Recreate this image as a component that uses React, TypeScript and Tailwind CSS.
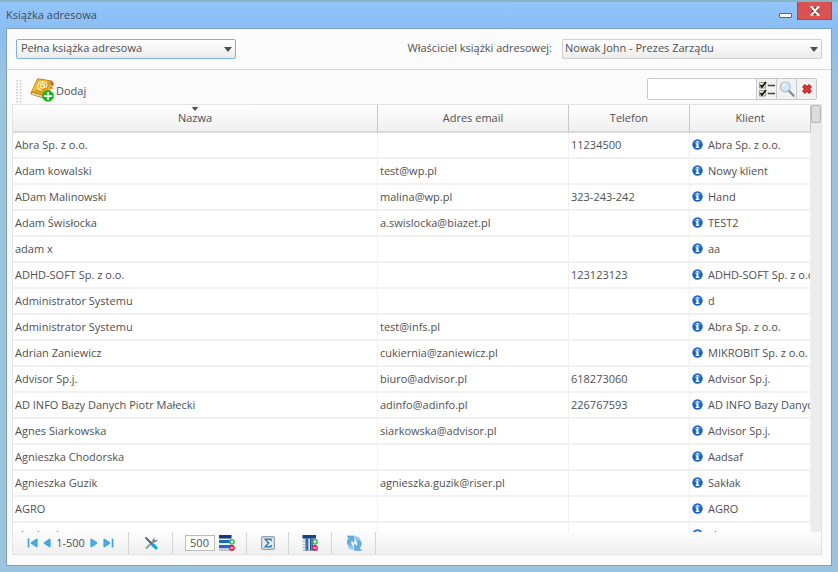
import React, { useState } from 'react';

type Contact = {
  name: string;
  email?: string;
  phone?: string;
  client: string;
};

const contacts: Contact[] = [
  { name: 'Abra Sp. z o.o.', phone: '11234500', client: 'Abra Sp. z o.o.' },
  { name: 'Adam kowalski', email: 'test@wp.pl', client: 'Nowy klient' },
  { name: 'ADam Malinowski', email: 'malina@wp.pl', phone: '323-243-242', client: 'Hand' },
  { name: 'Adam Świsłocka', email: 'a.swislocka@biazet.pl', client: 'TEST2' },
  { name: 'adam x', client: 'aa' },
  { name: 'ADHD-SOFT Sp. z o.o.', phone: '123123123', client: 'ADHD-SOFT Sp. z o.o.' },
  { name: 'Administrator Systemu', client: 'd' },
  { name: 'Administrator Systemu', email: 'test@infs.pl', client: 'Abra Sp. z o.o.' },
  { name: 'Adrian Zaniewicz', email: 'cukiernia@zaniewicz.pl', client: 'MIKROBIT Sp. z o.o.' },
  { name: 'Advisor Sp.j.', email: 'biuro@advisor.pl', phone: '618273060', client: 'Advisor Sp.j.' },
  { name: 'AD INFO Bazy Danych Piotr Małecki', email: 'adinfo@adinfo.pl', phone: '226767593', client: 'AD INFO Bazy Danych' },
  { name: 'Agnes Siarkowska', email: 'siarkowska@advisor.pl', client: 'Advisor Sp.j.' },
  { name: 'Agnieszka Chodorska', client: 'Aadsaf' },
  { name: 'Agnieszka Guzik', email: 'agnieszka.guzik@riser.pl', client: 'Sakłak' },
  { name: 'AGRO', client: 'AGRO' },
  { name: 'akademia', client: 'aka' },
];

const InfoIcon = () => (
  <svg viewBox="0 0 12 12" className="h-3 w-3 shrink-0">
    <circle cx="5.500" cy="5.500" r="5.200" fill="#1763c6" />
    <path d="M1.500 4.100a4.400 4.400 0 0 1 8 0Q5.500 5.500 1.500 4.100" fill="#6fa6e6" opacity=".6" />
    <path d="M4.500 2h2v1.500h-2zM3.800 4.300h2.700v3.400h.8v1.200H3.700V7.700h.8V5.500h-.7z" fill="#fff" />
  </svg>
);

const BookIcon = () => (
  <svg viewBox="0 0 24 24" className="h-6 w-6">
    <path d="M6.500 2Q7.500.4 9.500.6L21 2.400q2 .6 1.600 2.200L18.500 18 15.500 21 1.500 16.800Q.2 15.800.8 14.500z" fill="#a4660f" />
    <path d="M1.500 14.500 15.500 18.500 20 6l1.300.6L17 18.400l-1.500 1.700L2.200 16.400q-1.200-1-.7-1.900z" fill="#f5ead0" />
    <path d="M2 15.500 15.500 19.400" stroke="#c9b27e" strokeWidth=".5" />
    <path d="M6.900 2.400Q7.900 1 9.500 1.300L20.300 3q1.500.4 1 1.900L16.500 17q-.4 1-1.500.7L2.300 14.200q-1-.4-.6-1.400z" fill="#dd9d16" />
    <path d="M6.900 2.400Q7.900 1 9.500 1.300L20.300 3Q14 5 10.500 11.500L2 13z" fill="#f3c63a" opacity=".7" />
    <path d="M22 4.600h1.600v3h-2.500z" fill="#e5482b" />
    <path d="M20.800 8.500h1.800v2.500h-2.600z" fill="#ef8a22" />
    <ellipse cx="12.300" cy="8" rx="2" ry="1.900" fill="none" stroke="#fff6d8" strokeWidth="1.100" />
    <path d="M14.500 6.200 14 8.800q1.800 1.300 2.800-.9.500-3.900-4-4.200-4.700.2-5.400 4.300.2 4.100 4.900 4" fill="none" stroke="#fff6d8" strokeWidth="1.100" />
    <circle cx="18" cy="18" r="5.800" fill="#10bb1b" />
    <path d="M17 14.200h2V17h2.800v2H19v2.800h-2V19h-2.800v-2H17z" fill="#fff" />
  </svg>
);

const ChecklistIcon = () => (
  <svg viewBox="0 0 16 16" className="h-4 w-4">
    <path d="M.5 1.500h6V7h-6zM.5 9.500h6V15h-6z" fill="#e3e2cf" stroke="#8c8b7c" strokeWidth=".8" />
    <path d="M1.500 4 3 6 7 1M1.500 12 3 14 7 9" fill="none" stroke="#111" strokeWidth="1.700" />
    <path d="M8.800 4.500H16M8.800 12.500H16" stroke="#444" strokeWidth="1.500" />
  </svg>
);

const MagnifierIcon = () => (
  <svg viewBox="0 0 16 16" className="h-4 w-4">
    <path d="m10 10 4.600 4.600" stroke="#8b8b8b" strokeWidth="2.200" strokeLinecap="round" />
    <circle cx="6.300" cy="5.900" r="4.900" fill="#cfe9fb" stroke="#b4bdc4" strokeWidth="1.200" />
    <path d="M3 5.500a3.300 3.300 0 0 1 4.500-2.700Q5 4 3 5.500" fill="#fff" />
  </svg>
);

const RedCrossIcon = () => (
  <svg viewBox="0 0 12 12" className="h-3 w-3">
    <path d="m2.500 2.500 7 7M9.500 2.500l-7 7" stroke="#a81616" strokeWidth="4" />
    <path d="m2.500 2.500 7 7M9.500 2.500l-7 7" stroke="#e03a3a" strokeWidth="2.200" />
  </svg>
);

// Blue arrow used by the pager
const PagerArrow = ({ flip }: { flip?: boolean }) => (
  <svg viewBox="0 0 8 10" className={flip ? 'h-[10px] w-2 -scale-x-100' : 'h-[10px] w-2'}>
    <path d="M1.200 1.500v7L6.500 5z" fill="#4fb0f0" stroke="#3fa3e6" strokeWidth="1.600" strokeLinejoin="round" />
  </svg>
);

// Arrow with a bar, for the first and last page
const PagerEnd = ({ flip }: { flip?: boolean }) => (
  <svg viewBox="0 0 11 10" className={flip ? 'h-[10px] w-[11px] -scale-x-100' : 'h-[10px] w-[11px]'}>
    <path d="M1.200 1.500v7L6.500 5z" fill="#4fb0f0" stroke="#3fa3e6" strokeWidth="1.600" strokeLinejoin="round" />
    <path d="M9.500.5v9" stroke="#3ea0e4" strokeWidth="1.600" />
  </svg>
);

const ToolsIcon = () => (
  <svg viewBox="0 0 14 14" className="h-[14px] w-[14px]">
    <path d="M2 12.500 9.500 5" stroke="#9aa1a6" strokeWidth="2.200" />
    <path d="M8.500 5.500Q8 2.800 10.500 1.500L10.300 3.700l1.300.8L13.400 3Q13.400 6.200 10 6.500z" fill="#777f85" />
    <path d="M1.500 1.500 8 8" stroke="#596067" strokeWidth="1.800" />
    <path d="m8.500 8.500 3.500 3.300" stroke="#16a3dc" strokeWidth="3.200" strokeLinecap="round" />
  </svg>
);

const PlusMinus = () => (
  <>
    <circle cx="13" cy="6.800" r="2.900" fill="#38b449" />
    <path d="M11.400 6.800h3.200M13 5.200v3.200" stroke="#fff" strokeWidth="1.100" />
    <circle cx="13" cy="12.900" r="2.900" fill="#e01b49" />
    <path d="M11.400 12.900h3.200" stroke="#fff" strokeWidth="1.200" />
  </>
);

const RowsIcon = () => (
  <svg viewBox="0 0 16 16" className="h-4 w-4">
    <path d="M0 0h12.500v16H0z" fill="#e6ebf1" />
    <path d="M0 0h12.500v3.500H0z" fill="#12397f" />
    <path d="M0 5h12.500v3H0zM0 10h12.500v3H0z" fill="#1d69c4" />
    <path d="M0 14h12.500M0 15.700h12.500M3 13v3M6 13v3M9 13v3" stroke="#a2abb8" strokeWidth=".7" />
    <PlusMinus />
  </svg>
);

const ColumnsIcon = () => (
  <svg viewBox="0 0 16 16" className="h-4 w-4">
    <path d="M.5 0H14v16H.5z" fill="#e6eaef" />
    <path d="M.5 0H14v3.500H.5z" fill="#15428d" />
    <path d="M3.500 3.500h2.800V16H3.500zM8 3.500h2.800V16H8z" fill="#184a9d" />
    <path d="M4.400 4h1v12h-1zM8.900 4h1v12h-1z" fill="#3f94dd" />
    <path d="M.5 6.500h3M.5 9.500h3M.5 12.500h3M.5 15.500h13" stroke="#9aa4b2" strokeWidth=".7" />
    <PlusMinus />
  </svg>
);

const SumIcon = () => (
  <svg viewBox="0 0 14 14" className="h-[14px] w-[14px]">
    <rect x=".6" y=".6" width="12.800" height="12.800" rx="1.500" fill="#e4e9ec" stroke="#969ea4" strokeWidth="1.200" />
    <path d="M10 5V3.200H4.300L7.500 7l-3.200 3.800H10V9" fill="none" stroke="#2f7fb8" strokeWidth="1.500" />
  </svg>
);

const RefreshIcon = () => (
  <svg viewBox="0 0 16 16" className="h-4 w-4">
    <path d="M1 1h7v6.500L5.700 5.300Q4.300 6.800 4.900 9l2 2.800Q1.700 11.500 1.200 7.500q0-2.800 1.800-4.600z" fill="#62b0e8" stroke="#4f9bd6" strokeWidth=".6" />
    <path d="M15.500 15.500h-7V9l2.300 2.200Q12.200 9.700 11.600 7.500l-2-3.700Q14.800 4 15.300 8.500q0 2.800-1.900 4.800z" fill="#62b0e8" stroke="#4f9bd6" strokeWidth=".6" />
    <path d="M8.500 1q5 .2 6 4l-2.500 1Q11.300 4 8.500 3.800zM7.500 15q-5-.2-6-4L4 10q.7 2 3.500 2.200z" fill="#9ccdf3" />
  </svg>
);

const Caret = ({ className }: { className: string }) => (
  <svg viewBox="0 0 8 5" className={className}>
    <path d="M0 0h8L4 5z" fill="#505050" />
  </svg>
);

const headCell =
  'relative h-7 border-r border-b-2 border-r-[#c8c8c8] border-b-[#d9d9d9] bg-linear-to-b from-white to-[#efefef] p-0 text-center font-normal';
const bodyCell = 'h-[26px] truncate border-r border-b-2 border-[#f1f1f1] py-0 pr-0 pl-[2px]';
const footGroup = 'flex items-center justify-center border-r border-[#d5d5d5]';

const AddressBook: React.FC = () => {
  const [book, setBook] = useState('full');
  const [owner, setOwner] = useState('nowak');
  const [query, setQuery] = useState('');
  const [pageSize, setPageSize] = useState('500');

  return (
    <div className="flex h-screen flex-col border-t-2 border-t-[#86b4c4] bg-linear-to-b from-[#92c6fb] from-0% via-[#8abdf2] via-5% to-[#9dc4df] to-15% px-[6px] pb-[6px] font-['Open_Sans','Noto_Sans',sans-serif] text-[11px] text-[#505050]">
      {/* Title bar */}
      <header className="flex h-[26px] shrink-0 items-start justify-between">
        <h1 className="pt-[5px] text-[11px] leading-4 text-[#3f4b58]">Książka adresowa</h1>
        <div className="flex items-start">
          <button type="button" aria-label="Minimalizuj" className="flex h-[18px] w-6 items-end justify-center pb-[2px]">
            <span className="h-[5px] w-[13px] rounded-[1px] border border-[#4467a5] bg-white" />
          </button>
          <button type="button" aria-label="Zamknij" className="flex h-[18px] w-[35px] items-center justify-center border border-t-0 border-[#b34444] bg-[#dc5250]">
            <svg viewBox="0 0 12 10" className="h-[10px] w-3">
              <path d="M2.800 1.200 9.200 8.800M9.200 1.200 2.800 8.800" stroke="#7a3a3a" strokeWidth="4" />
              <path d="M3 1.500 9 8.500M9 1.500 3 8.500M1.500 1.200h3M7.500 1.200h3M1.500 8.800h3M7.500 8.800h3" stroke="#fff" strokeWidth="2" />
            </svg>
          </button>
        </div>
      </header>

      <main className="flex min-h-0 flex-1 flex-col border border-[#7f9fbd] bg-[#fbfbfb]">
        {/* Book and owner selection */}
        <div className="flex h-[41px] shrink-0 items-center justify-between border-b border-[#d8d8d8] px-[9px] pb-px">
          <div className="relative">
            <select
              aria-label="Książka"
              value={book}
              onChange={(e) => setBook(e.target.value)}
              className="h-5 w-[220px] appearance-none rounded-[2px] border border-[#7fb2dd] bg-linear-to-b from-white to-[#ececec] px-1 outline-none"
            >
              <option value="full">Pełna książka adresowa</option>
            </select>
            <Caret className="pointer-events-none absolute top-2 right-1 h-[5px] w-2" />
          </div>
          <div className="flex items-center gap-[10px]">
            <label htmlFor="owner">Właściciel książki adresowej:</label>
            <div className="relative">
              <select
                id="owner"
                value={owner}
                onChange={(e) => setOwner(e.target.value)}
                className="h-5 w-[260px] appearance-none rounded-[2px] border border-[#cfcfcf] bg-linear-to-b from-white to-[#ececec] px-[2px] outline-none"
              >
                <option value="nowak">Nowak John - Prezes Zarządu</option>
              </select>
              <Caret className="pointer-events-none absolute top-2 right-1 h-[5px] w-2" />
            </div>
          </div>
        </div>

        {/* Toolbar */}
        <div className="flex h-[34px] shrink-0 items-end justify-between pr-[14px] pl-[9px]">
          <div className="flex items-end gap-[8px]">
            <svg viewBox="0 0 6 24" className="h-6 w-[6px]">
              <path d="M1 0v24M4.500 0v24" stroke="#c9c9c9" strokeWidth="1.500" strokeDasharray="1.500 1.500" />
            </svg>
            <button type="button" className="flex items-end gap-[2px] pb-[2px]">
              <BookIcon />
              <span className="pb-[3px]">Dodaj</span>
            </button>
          </div>
          <div className="mb-1 flex h-[22px] overflow-hidden rounded-[2px] border border-[#c9c9c9] bg-[#f1f1f1]">
            <input
              aria-label="Szukaj"
              value={query}
              onChange={(e) => setQuery(e.target.value)}
              className="w-[108px] bg-white px-1 outline-none"
            />
            <button type="button" aria-label="Pola wyszukiwania" className="flex w-5 items-center justify-center border-l border-[#c9c9c9]">
              <ChecklistIcon />
            </button>
            <button type="button" aria-label="Znajdź" className="flex w-5 items-center justify-center border-l border-[#c9c9c9]">
              <MagnifierIcon />
            </button>
            <button type="button" aria-label="Wyczyść" className="flex w-5 items-center justify-center border-l border-[#c9c9c9]">
              <RedCrossIcon />
            </button>
          </div>
        </div>

        {/* Contacts */}
        <div className="mr-[9px] mb-[10px] ml-[5px] flex min-h-0 flex-1 flex-col border border-[#e4e4e4]">
          <div className="flex min-h-0 flex-1">
            <div className="min-w-0 flex-1 overflow-hidden bg-white">
              <table className="w-full table-fixed border-separate border-spacing-0">
                <colgroup>
                  <col />
                  <col className="w-[191px]" />
                  <col className="w-[121px]" />
                  <col className="w-[121px]" />
                </colgroup>
                <thead>
                  <tr>
                    <th className={headCell}>
                      <Caret className="absolute top-[2px] left-1/2 h-1 w-2 -translate-x-1/2" />
                      Nazwa
                    </th>
                    <th className={headCell}>Adres email</th>
                    <th className={headCell}>Telefon</th>
                    <th className={headCell}>Klient</th>
                  </tr>
                </thead>
                <tbody>
                  {contacts.map((c, i) => (
                    <tr key={i}>
                      <td className={bodyCell}>{c.name}</td>
                      <td className={bodyCell}>{c.email}</td>
                      <td className={bodyCell}>{c.phone}</td>
                      <td className={bodyCell}>
                        <div className="flex items-center gap-1 overflow-hidden whitespace-nowrap">
                          <InfoIcon />
                          {c.client}
                        </div>
                      </td>
                    </tr>
                  ))}
                </tbody>
              </table>
            </div>
            <div className="w-[10px] bg-[#ececec]">
              <div className="h-[18px] rounded-[2px] border border-[#b5b5b5] bg-[#dcdcdc]" />
            </div>
          </div>

          {/* Pager */}
          <footer className="flex h-[22px] shrink-0 bg-linear-to-b from-[#fcfcfc] to-[#f0f0f0]">
            <div className={`${footGroup} w-[116px] gap-[5px]`}>
              <button type="button" aria-label="Pierwsza strona"><PagerEnd flip /></button>
              <button type="button" aria-label="Poprzednia strona"><PagerArrow flip /></button>
              <span>1-500</span>
              <button type="button" aria-label="Następna strona"><PagerArrow /></button>
              <button type="button" aria-label="Ostatnia strona"><PagerEnd /></button>
            </div>
            <div className={`${footGroup} w-11`}>
              <button type="button" aria-label="Narzędzia"><ToolsIcon /></button>
            </div>
            <div className={`${footGroup} w-[74px] gap-1`}>
              <input
                aria-label="Liczba wierszy"
                value={pageSize}
                onChange={(e) => setPageSize(e.target.value)}
                className="h-4 w-[30px] border border-[#bcbcbc] bg-white text-center outline-none"
              />
              <button type="button" aria-label="Wiersze"><RowsIcon /></button>
            </div>
            <div className={`${footGroup} w-[42px]`}>
              <button type="button" aria-label="Suma"><SumIcon /></button>
            </div>
            <div className={`${footGroup} w-[43px]`}>
              <button type="button" aria-label="Kolumny"><ColumnsIcon /></button>
            </div>
            <div className={`${footGroup} w-11`}>
              <button type="button" aria-label="Odśwież"><RefreshIcon /></button>
            </div>
          </footer>
        </div>
      </main>
    </div>
  );
};

export default function App() {
  return <AddressBook />;
}
